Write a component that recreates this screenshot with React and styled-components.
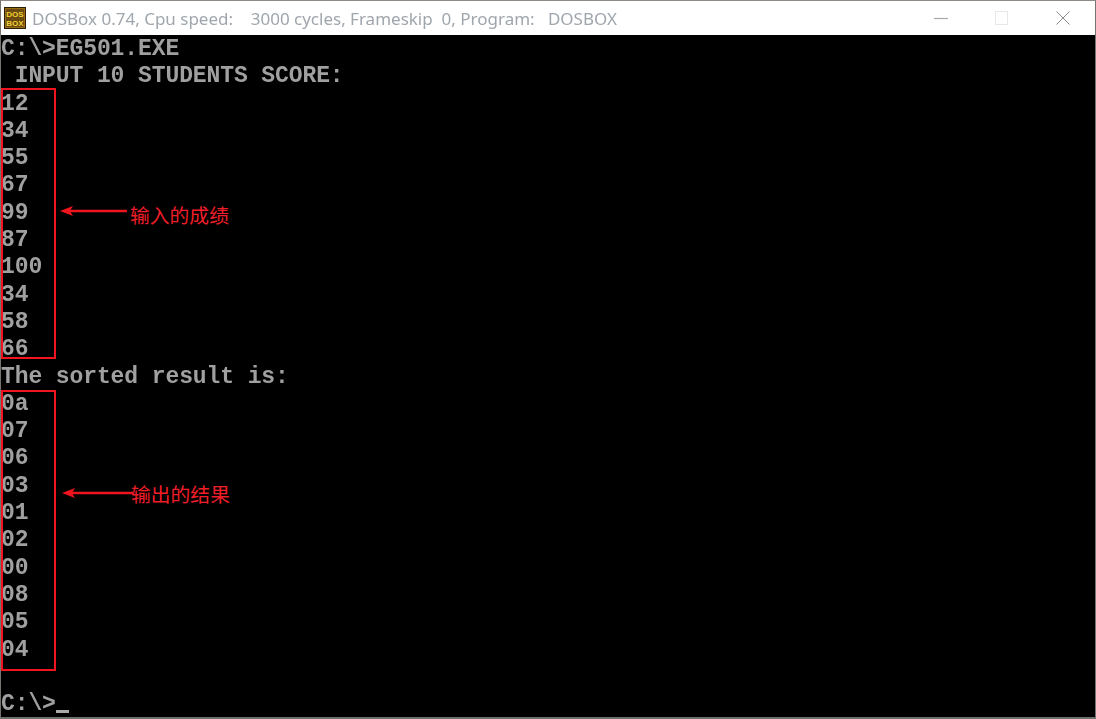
import React from 'react';
import styled, { createGlobalStyle } from 'styled-components';

const GlobalStyle = createGlobalStyle`
	html, body {
		margin: 0;
		padding: 0;
		background: #000;
	}
`;

const Window = styled.div`
	width: 1096px;
	height: 719px;
	display: flex;
	flex-direction: column;
	box-sizing: border-box;
	overflow: hidden;
	border-top: 1px solid #8f8a85;
	border-left: 1px solid #77736f;
	border-right: 1px solid #77736f;
	border-bottom: 2px solid #6f6f6f;
`;

const TitleBar = styled.div`
	height: 34px;
	flex: none;
	display: flex;
	align-items: center;
	background: #fff;
	padding-left: 3px;
	box-sizing: border-box;
`;

const TitleText = styled.div`
	margin-left: 6px;
	font-family: 'Noto Sans', 'Open Sans', sans-serif;
	font-size: 17px;
	color: #a0a6ad;
	white-space: pre;
	flex: 1;
	filter: blur(0.3px);
`;

const Controls = styled.div`
	display: flex;
	align-items: center;
	padding-right: 25px;
	gap: 47px;
`;

const Console = styled.div`
	position: relative;
	flex: 1;
	padding-top: 1px;
	background: #000;
`;

const Line = styled.div`
	height: 27.3px;
	line-height: 27.3px;
	font-family: 'Liberation Mono', monospace;
	font-weight: 700;
	font-size: 23px;
	letter-spacing: -0.1px;
	color: #a0a0a0;
	white-space: pre;
	filter: blur(0.5px);
`;

const Cursor = styled.span`
	display: inline-block;
	width: 13px;
	height: 3px;
	background: #aaa;
	vertical-align: -3px;
`;

const MarkBox = styled.div`
	position: absolute;
	left: 0;
	width: 55px;
	top: ${p => p.$top}px;
	height: ${p => p.$height}px;
	box-sizing: border-box;
	border: 2px solid #f0141e;
`;

const Note = styled.div`
	position: absolute;
	top: ${p => p.$top}px;
	left: ${p => p.$left}px;
	display: flex;
	align-items: center;
`;

const ArrowWrap = styled.div`
	display: flex;
	margin-bottom: ${p => p.$lift}px;
`;

const NoteText = styled.span`
	margin-left: ${p => p.$gap}px;
	font-family: 'Noto Sans CJK SC', sans-serif;
	font-size: 19.8px;
	line-height: 26px;
	color: #f01e28;
`;

const Logo = () => (
	<svg width='22' height='22' viewBox='0 0 22 22'>
		<rect x='0' y='0' width='22' height='22' fill='#2a1c08' />
		<rect x='1' y='1' width='20' height='20' fill='#9a6c14' />
		<rect x='2' y='2' width='18' height='18' fill='#6a4a10' />
		<text x='11' y='10' textAnchor='middle' fontFamily='Liberation Sans' fontWeight='700' fontSize='8' fill='#f0d030'>DOS</text>
		<text x='11' y='19' textAnchor='middle' fontFamily='Liberation Sans' fontWeight='700' fontSize='8' fill='#f0d030'>BOX</text>
	</svg>
);

const MinIcon = () => (
	<svg width='14' height='14' viewBox='0 0 14 14'>
		<path d='M0 7.5H14' stroke='#a8a8a8' strokeWidth='1.2' />
	</svg>
);

const MaxIcon = () => (
	<svg width='14' height='14' viewBox='0 0 14 14'>
		<rect x='0.5' y='0.5' width='12' height='13' fill='none' stroke='#e8e8e8' />
	</svg>
);

const CloseIcon = () => (
	<svg width='14' height='14' viewBox='0 0 14 14'>
		<path d='M0.5 0.5L13.5 13.5M13.5 0.5L0.5 13.5' stroke='#8a8a8a' strokeWidth='1' />
	</svg>
);

const Arrow = ({ width }) => (
	<svg width={width} height='12' viewBox={`0 0 ${width} 12`}>
		<path d={`M8 6H${width}`} stroke='#f0141e' strokeWidth='2.4' />
		<path d='M0 6L13 1L10 6L13 11Z' fill='#f0141e' />
	</svg>
);

const lines = [
	'C:\\>EG501.EXE',
	' INPUT 10 STUDENTS SCORE:',
	'12',
	'34',
	'55',
	'67',
	'99',
	'87',
	'100',
	'34',
	'58',
	'66',
	'The sorted result is:',
	'0a',
	'07',
	'06',
	'03',
	'01',
	'02',
	'00',
	'08',
	'05',
	'04',
	''
];

const App = () => (
	<>
		<GlobalStyle />
		<Window>
			<TitleBar>
				<Logo />
				<TitleText>{'DOSBox 0.74, Cpu speed:    3000 cycles, Frameskip  0, Program:   DOSBOX'}</TitleText>
				<Controls>
					<MinIcon />
					<MaxIcon />
					<CloseIcon />
				</Controls>
			</TitleBar>
			<Console>
				{lines.map((text, i) => (
					<Line key={i}>{text}</Line>
				))}
				<Line>
					{'C:\\>'}
					<Cursor />
				</Line>
				<MarkBox $top={53} $height={271} />
				<MarkBox $top={355} $height={281} />
				<Note $top={167} $left={59}>
					<ArrowWrap $lift={8}>
						<Arrow width={67} />
					</ArrowWrap>
					<NoteText $gap={3}>输入的成绩</NoteText>
				</Note>
				<Note $top={446} $left={61}>
					<ArrowWrap $lift={2}>
						<Arrow width={71} />
					</ArrowWrap>
					<NoteText $gap={-2}>输出的结果</NoteText>
				</Note>
			</Console>
		</Window>
	</>
);

export default App;
